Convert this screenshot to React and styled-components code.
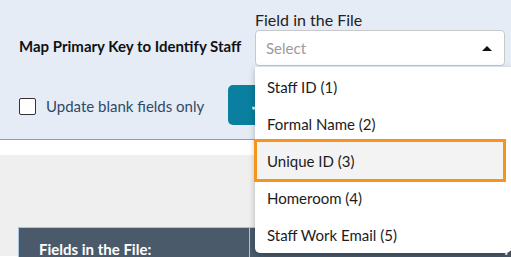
import React from "react";
import styled, { createGlobalStyle } from "styled-components";

const GlobalStyle = createGlobalStyle`
  body {
    margin: 0;
    font-family: Lato, "Liberation Sans", sans-serif;
    background: #fff;
  }
`;

const Page = styled.div`
  position: relative;
  width: 511px;
  height: 257px;
  overflow: hidden;
`;

const TopPanel = styled.section`
  height: 140px;
  box-sizing: border-box;
  background: #e5ecf6;
  border-bottom: 1px solid #9a9a9a;
  display: grid;
  grid-template-columns: 209px 1fr;
  grid-template-rows: 67px 1fr;
  padding: 0 0 0 19px;
`;

const KeyLabel = styled.div`
  align-self: end;
  height: 36px;
  margin-bottom: 3px;
  display: flex;
  align-items: center;
  white-space: nowrap;
  font-size: 15px;
  font-weight: 700;
  color: #111;
`;

const FieldGroup = styled.div`
  position: relative;
  padding: 10px 6px 0 27px;
`;

const FieldLabel = styled.div`
  font-size: 16px;
  color: #222;
  line-height: 19px;
  margin-bottom: 1px;
`;

const SelectBox = styled.div`
  height: 36px;
  box-sizing: border-box;
  background: #fff;
  border: 1px solid #c8c8c8;
  border-radius: 4px;
  display: flex;
  align-items: center;
  justify-content: space-between;
  padding: 0 12px 0 10px;
  font-size: 15px;
  color: #9b9b9b;
`;

const Caret = styled.span`
  width: 0;
  height: 0;
  border-left: 5px solid transparent;
  border-right: 5px solid transparent;
  border-bottom: 5px solid #111;
`;

const CheckRow = styled.label`
  display: flex;
  align-items: center;
  gap: 10px;
  margin-top: 30px;
  align-self: start;
  white-space: nowrap;
  font-size: 15px;
  color: #2e4a66;
`;

const CheckBox = styled.span`
  width: 15px;
  height: 15px;
  flex-shrink: 0;
  border: 1.5px solid #333;
  border-radius: 2px;
  background: #fff;
`;

const ApplyButton = styled.button`
  margin-top: 18px;
  align-self: start;
  width: 120px;
  height: 40px;
  border: 0;
  border-radius: 5px;
  background: #0a7fa0;
  color: #fff;
  font: inherit;
  font-size: 14px;
  text-align: left;
  padding-left: 22px;
`;

const Spacer = styled.div`
  height: 15px;
  background: #fff;
`;

const GrayArea = styled.div`
  height: 101px;
  background: #efefef;
  padding: 72px 0 0 18px;
  box-sizing: border-box;
`;

const TableHead = styled.div`
  display: grid;
  grid-template-columns: 231px 250px 1fr;
  background: #4a5a6b;
  border-top: 1px solid #a9c4e0;
  border-left: 1px solid #a9c4e0;
  height: 40px;
`;

const HeadCell = styled.div`
  color: #fff;
  font-size: 15px;
  font-weight: 700;
  white-space: nowrap;
  padding: 12px 0 0 ${(p) => p.inset || 20}px;
  border-right: 1px solid ${(p) => (p.divider ? "#a9c4e0" : "transparent")};
`;

const Menu = styled.ul`
  position: absolute;
  left: 255px;
  top: 67px;
  width: 256px;
  margin: 0;
  padding: 1px 0 0;
  list-style: none;
  background: #fff;
  border-radius: 0 0 5px 5px;
  box-shadow: 0 2px 6px rgba(0, 0, 0, 0.25);
  z-index: 5;
`;

const MenuItem = styled.li`
  position: relative;
  height: 37px;
  display: flex;
  align-items: center;
  padding-left: 12px;
  font-size: 15px;
  color: #1c1c1c;
  background: ${(p) => (p.active ? "#f3f3f3" : "transparent")};
  margin-right: ${(p) => (p.active ? "6px" : "0")};

  &::after {
    content: "";
    display: ${(p) => (p.active ? "block" : "none")};
    position: absolute;
    left: -1px;
    right: -1px;
    top: -3px;
    bottom: -3px;
    border: 3px solid #f7941d;
  }
`;

const options = [
  "Staff ID (1)",
  "Formal Name (2)",
  "Unique ID (3)",
  "Homeroom (4)",
  "Staff Work Email (5)",
];

export default function App() {
  return (
    <Page>
      <GlobalStyle />
      <TopPanel>
        <KeyLabel>Map Primary Key to Identify Staff</KeyLabel>
        <FieldGroup>
          <FieldLabel>Field in the File</FieldLabel>
          <SelectBox>
            Select
            <Caret />
          </SelectBox>
        </FieldGroup>
        <CheckRow>
          <CheckBox />
          Update blank fields only
        </CheckRow>
        <ApplyButton>✓ Apply</ApplyButton>
      </TopPanel>
      <Spacer />
      <GrayArea>
        <TableHead>
          <HeadCell divider>Fields in the File:</HeadCell>
          <HeadCell />
          <HeadCell inset={4}>Fo</HeadCell>
        </TableHead>
      </GrayArea>
      <Menu>
        {options.map((o, i) => (
          <MenuItem key={o} active={i === 2}>
            {o}
          </MenuItem>
        ))}
      </Menu>
    </Page>
  );
}
